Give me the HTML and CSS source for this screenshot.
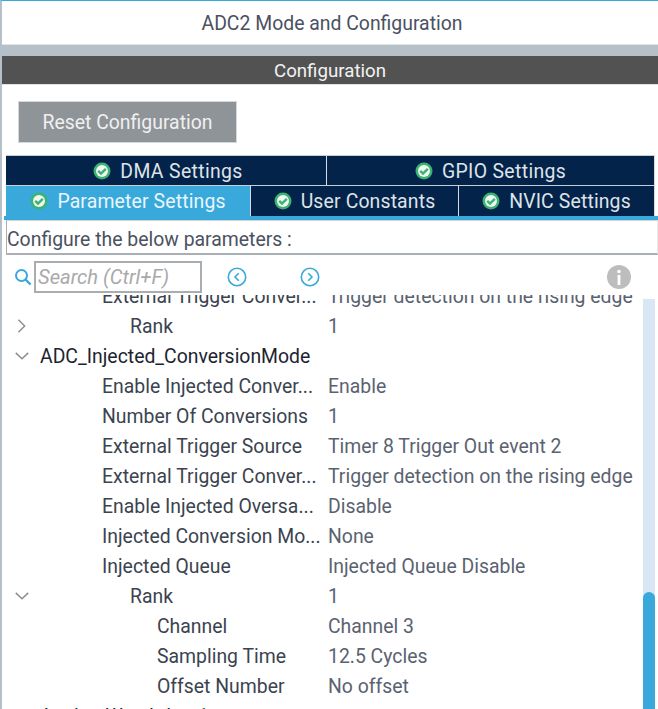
FILE: index.html
```html
<!DOCTYPE html>
<html lang="en">
<head>
<meta charset="utf-8">
<title>ADC2 Mode and Configuration</title>
<link rel="stylesheet" href="styles.css">
</head>
<body>
<svg width="0" height="0" class="defs" aria-hidden="true">
  <symbol id="ok" viewBox="0 0 18 18">
    <circle cx="9" cy="9" r="8.5" fill="#3cb371"/>
    <circle cx="9" cy="9" r="6" fill="#eef7f2"/>
    <path d="M5.2 8.8 8 11.6 12.8 6.8" fill="none" stroke="#3cb371" stroke-width="2.4"/>
  </symbol>
  <symbol id="open" viewBox="0 0 18 18"><path d="M2 5.5 9 12 16 5.5" fill="none" stroke="#8a8d90" stroke-width="1.6"/></symbol>
  <symbol id="closed" viewBox="0 0 18 18"><path d="M5 2 12 9 5 16" fill="none" stroke="#8a8d90" stroke-width="1.6"/></symbol>
</svg>
<div class="page">
  <header class="title">ADC2 Mode and Configuration</header>
  <div class="band"></div>
  <div class="section-head">Configuration</div>
  <div class="reset-row"><button class="reset" type="button">Reset Configuration</button></div>
  <div class="tabs">
    <div class="tab-row top">
      <div class="tab dma"><svg class="ok"><use href="#ok"/></svg>DMA Settings</div>
      <div class="tab gpio"><svg class="ok"><use href="#ok"/></svg>GPIO Settings</div>
    </div>
    <div class="tab-row bottom">
      <div class="tab active param"><svg class="ok"><use href="#ok"/></svg>Parameter Settings</div>
      <div class="tab user"><svg class="ok"><use href="#ok"/></svg>User Constants</div>
      <div class="tab nvic"><svg class="ok"><use href="#ok"/></svg>NVIC Settings</div>
    </div>
  </div>
  <div class="blue-rule"></div>
  <div class="hint">Configure the below parameters :</div>
  <div class="tools">
    <svg class="search-icon" viewBox="0 0 18 18"><circle cx="7.5" cy="7.5" r="5.5" fill="none" stroke="#39a9dc" stroke-width="2"/><path d="M11.5 11.5 16.5 16.5" stroke="#39a9dc" stroke-width="2.4"/></svg>
    <div class="search">Search (Ctrl+F)</div>
    <svg class="nav prev" viewBox="0 0 20 20"><circle cx="10" cy="10" r="8.7" fill="none" stroke="#39a9dc" stroke-width="1.6"/><path d="M11.8 6.2 8 10l3.8 3.8" fill="none" stroke="#39a9dc" stroke-width="1.6"/></svg>
    <svg class="nav next" viewBox="0 0 20 20"><circle cx="10" cy="10" r="8.7" fill="none" stroke="#39a9dc" stroke-width="1.6"/><path d="M8.2 6.2 12 10l-3.8 3.8" fill="none" stroke="#39a9dc" stroke-width="1.6"/></svg>
    <svg class="info" viewBox="0 0 24 24"><circle cx="12" cy="12" r="12" fill="#bdbdbd"/><circle cx="12" cy="6.5" r="1.8" fill="#fff"/><rect x="10.6" y="10" width="2.8" height="10" fill="#fff"/></svg>
  </div>
  <div class="tree-wrap">
    <div class="tree">
      <div class="row lvl2"><span class="name">External Trigger Conver...</span><span class="val">Trigger detection on the rising edge</span></div>
      <div class="row lvl1"><svg class="twist"><use href="#closed"/></svg><span class="name">Rank</span><span class="val">1</span></div>
      <div class="row lvl0"><svg class="twist"><use href="#open"/></svg><span class="name">ADC_Injected_ConversionMode</span></div>
      <div class="row lvl2"><span class="name">Enable Injected Conver...</span><span class="val">Enable</span></div>
      <div class="row lvl2"><span class="name">Number Of Conversions</span><span class="val">1</span></div>
      <div class="row lvl2"><span class="name">External Trigger Source</span><span class="val">Timer 8 Trigger Out event 2</span></div>
      <div class="row lvl2"><span class="name">External Trigger Conver...</span><span class="val">Trigger detection on the rising edge</span></div>
      <div class="row lvl2"><span class="name">Enable Injected Oversa...</span><span class="val">Disable</span></div>
      <div class="row lvl2"><span class="name">Injected Conversion Mo...</span><span class="val">None</span></div>
      <div class="row lvl2"><span class="name">Injected Queue</span><span class="val">Injected Queue Disable</span></div>
      <div class="row lvl1"><svg class="twist"><use href="#open"/></svg><span class="name">Rank</span><span class="val">1</span></div>
      <div class="row lvl3"><span class="name">Channel</span><span class="val">Channel 3</span></div>
      <div class="row lvl3"><span class="name">Sampling Time</span><span class="val">12.5 Cycles</span></div>
      <div class="row lvl3"><span class="name">Offset Number</span><span class="val">No offset</span></div>
      <div class="row lvl0"><span class="name">Analog Watchdog 1</span></div>
    </div>
    <div class="scroll"><div class="thumb"></div></div>
  </div>
</div>
</body>
</html>
```

FILE: styles.css
```css
* { box-sizing: border-box; }
html, body { margin: 0; height: 100%; overflow: hidden; background: #fff; }
body { font-family: Roboto, "Liberation Sans", sans-serif; color: #3b4350; }
.defs { position: absolute; }
.page {
  height: 709px;
  border-top: 1px solid #39a9dc;
  border-left: 2px solid #b5c0c8;
  overflow: hidden;
  display: flex;
  flex-direction: column;
}
.title {
  height: 44px;
  flex: none;
  display: flex;
  align-items: center;
  justify-content: center;
  padding: 2px 0 0 4px;
  font-size: 19.4px;
  color: #4a5160;
  border-bottom: 1px solid #dfe3e6;
}
.band { height: 11px; flex: none; background: #b5c0c8; }
.section-head {
  height: 29px;
  flex: none;
  background: #525252;
  color: #f2f2f2;
  font-size: 18.7px;
  display: flex;
  align-items: center;
  justify-content: center;
  padding-top: 2px;
  border-bottom: 1px solid #dfe3e6;
}
.reset-row { height: 70px; flex: none; padding: 16px 0 0 16px; }
.reset {
  width: 219px;
  height: 42px;
  background: #8f9499;
  border: 1px solid #d5d8da;
  color: #f0f0f0;
  font: 19.4px Roboto, sans-serif;
  padding: 0;
}
.tabs { flex: none; margin-left: 4px; width: 649px; }
.tab-row { display: flex; }
.tab-row.top { height: 30px; }
.tab-row.bottom { height: 31px; }
.tab {
  background: #03234b;
  color: #dfe3e8;
  font-size: 19.4px;
  display: flex;
  align-items: center;
  justify-content: center;
  gap: 9px;
  border-top: 1px solid #c9ced2;
  border-right: 1px solid #d8dcdf;
}
.tab-row.top .tab { padding-top: 1px; letter-spacing: .35px; }
.tab-row.top .dma { padding-left: 4px; }
.tab-row.bottom .tab { letter-spacing: .15px; }
.tab.active { background: #39a9dc; color: #eaf6fc; }
.dma { width: 321px; }
.gpio { width: 328px; }
.param { width: 245px; }
.user { width: 208px; }
.nvic { width: 196px; }
.ok { width: 18px; height: 18px; flex: none; }
.blue-rule { height: 4px; flex: none; background: #39a9dc; margin-left: 2px; }
.hint {
  height: 35px;
  flex: none;
  margin-left: 4px;
  padding: 5px 0 0;
  border: 1px solid #a8b0b5;
  border-top-color: #d0d4d7;
  border-right-color: #e8e8e8;
  border-bottom-width: 2px;
  font-size: 19.4px;
  line-height: 28px;
  color: #4a5160;
}
.tools { height: 40px; padding-top: 4px; flex: none; display: flex; align-items: center; }
.search-icon { width: 18px; height: 18px; margin-left: 12px; flex: none; }
.search {
  width: 168px;
  height: 32px;
  margin-left: 2px;
  border: 2px solid #a8adb2;
  padding-left: 2px;
  font-size: 20.2px;
  line-height: 29px;
  font-style: italic;
  color: #a9a9a9;
}
.nav { width: 20px; height: 20px; flex: none; }
.prev { margin-left: 25px; }
.next { margin-left: 53px; }
.info { width: 24px; height: 24px; flex: none; margin-left: auto; margin-right: 27px; }
.tree-wrap { flex: 1; position: relative; overflow: hidden; }
.tree { margin-top: -14px; }
.row { height: 30px; display: flex; align-items: center; position: relative; font-size: 19.4px; color: #3b4350; }
.name { white-space: nowrap; flex: none; }
.lvl0 .name { width: 286px; margin-left: 38px; color: #1c2430; }
.lvl1 .name { width: 198px; margin-left: 128px; }
.lvl2 .name { width: 226px; margin-left: 100px; }
.lvl3 .name { width: 171px; margin-left: 155px; }
.val { white-space: nowrap; color: #5a6270; }
.twist { width: 16px; height: 16px; position: absolute; left: 12px; top: 7px; }
.scroll { position: absolute; right: 3px; top: 4px; bottom: 0; width: 12px; background: #d9e7f5; }
.thumb { position: absolute; left: 0; right: 0; top: 293px; bottom: 0; background: #39a9dc; border-radius: 6px 6px 0 0; }
```
